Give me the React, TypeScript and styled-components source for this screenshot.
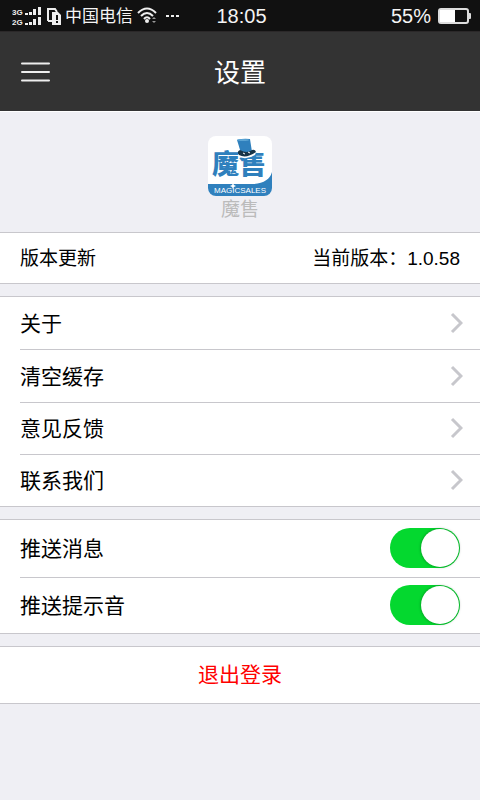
import React, { useState } from "react";
import styled, { createGlobalStyle, css } from "styled-components";

const GlobalStyle = createGlobalStyle`
  * { box-sizing: border-box; }
  body {
    margin: 0;
    background: #efeff4;
    font-family: "Liberation Sans", "Noto Sans CJK SC", sans-serif;
    color: #000;
  }
  button { font: inherit; color: inherit; background: none; border: 0; padding: 0; margin: 0; cursor: pointer; }
  h1, p { margin: 0; font-weight: 400; }
  svg { display: block; flex: none; }
`;

const Page = styled.div`
  min-height: 100vh;
  background: #efeff4;
`;

const StatusBar = styled.div`
  display: grid;
  grid-template-columns: 1fr auto 1fr;
  align-items: center;
  height: 32px;
  padding: 0 9px 0 12px;
  background: #111;
  border-bottom: 1px solid #2b2829;
  color: #f4f4f4;
  font-size: 20px;
  line-height: 24px;
`;

const StatusSide = styled.div<{ $end?: boolean }>`
  display: flex;
  align-items: center;
  gap: 4px;
  justify-content: ${(p) => (p.$end ? "flex-end" : "flex-start")};
`;

const Carrier = styled.span`
  padding-top: 2px;
  font-size: 17px;
  white-space: nowrap;
`;

const Charge = styled.span`
  margin-right: 3px;
`;

const Header = styled.header`
  display: grid;
  grid-template-columns: 1fr auto 1fr;
  align-items: center;
  height: 80px;
  background: #333;
  padding: 0 20px;
  border-bottom: 1px solid #fff;
  color: #fff;
`;

const MenuButton = styled.button`
  justify-self: start;
`;

const Title = styled.h1`
  padding-top: 2px;
  font-size: 26px;
  line-height: 40px;
`;

const Brand = styled.section`
  display: flex;
  flex-direction: column;
  align-items: center;
  padding: 24px 0 10px;
`;

const BrandName = styled.p`
  padding-top: 2px;
  font-size: 19px;
  line-height: 24px;
  color: #bbb;
`;

const Groups = styled.main`
  display: flex;
  flex-direction: column;
  gap: 12px;
`;

const Group = styled.section<{ $height: number }>`
  display: grid;
  grid-auto-rows: 1fr;
  min-height: ${(p) => p.$height}px;
  padding-left: 20px;
  background: #fff;
  border: solid #c8c7cc;
  border-width: 1px 0;
`;

const rowStyle = css`
  display: flex;
  align-items: center;
  justify-content: space-between;
  width: 100%;
  padding-right: 20px;
  font-size: 21px;
  line-height: 30px;
  text-align: left;
  & + & {
    border-top: 1px solid #c8c7cc;
  }
`;

const LinkRow = styled.button`
  ${rowStyle}
  padding-right: 17px;
`;

const ToggleRow = styled.label`
  ${rowStyle}
`;

const VersionRow = styled.button`
  ${rowStyle}
  font-size: 19px;
`;

const RowText = styled.span`
  padding-top: 2px;
`;

const Switch = styled.input`
  appearance: none;
  flex: none;
  display: flex;
  align-items: center;
  width: 70px;
  height: 40px;
  margin: 0;
  padding: 1px;
  border-radius: 20px;
  background: #ddd;
  cursor: pointer;
  &::before {
    content: "";
    width: 38px;
    height: 38px;
    border-radius: 50%;
    background: #fff;
    box-shadow: 0 0 3px rgba(0, 0, 0, 0.4);
  }
  &:checked {
    background: #04d82f;
    justify-content: flex-end;
  }
`;

const LogoutButton = styled.button`
  min-height: 58px;
  width: 100%;
  background: #fff;
  border: solid #c8c7cc;
  border-width: 1px 0;
  color: #f00;
  font-size: 21px;
  line-height: 30px;
`;

const SignalIcon = () => (
  <svg width="31" height="20" viewBox="0 0 31 20" fill="#eee" aria-hidden="true">
    <g fontFamily="Liberation Sans, sans-serif" fontSize="8" fontWeight="700">
      <text x="0" y="9">3G</text>
      <text x="0" y="19">2G</text>
    </g>
    <path d="M13 7h3v2h-3zM17 6h3v3h-3zM21 3h3v6h-3zM26 1h3v8h-3zM13 17h3v2h-3zM17 16h3v3h-3zM21 13h3v6h-3zM26 11h3v8h-3z" />
  </svg>
);

const SimIcon = () => (
  <svg width="14" height="18" viewBox="0 0 14 18" aria-hidden="true">
    <path d="M1 14V2h7l2 3M1 14h4" fill="none" stroke="#eee" strokeWidth="2" />
    <path d="M5 5h6l3 3v10H5z" fill="#eee" />
    <path d="M9 8h2v5H9zM9 14h2v2H9z" fill="#111" />
  </svg>
);

const WifiIcon = () => (
  <svg width="21" height="17" viewBox="0 0 21 17" aria-hidden="true">
    <g fill="none" stroke="#eee" strokeWidth="2">
      <path d="M1 6Q10 -3 19 6" />
      <path d="M4 9Q10 3 16 9" />
      <path d="M7 12Q10 8.500 13 12" />
    </g>
    <circle cx="10" cy="14" r="2" fill="#eee" />
    <path d="M15 12l2-2 2 2zM15 14l2 2 2-2z" fill="#999" />
  </svg>
);

const DotsIcon = () => (
  <svg width="20" height="4" viewBox="0 0 20 4" fill="#eee" aria-hidden="true">
    <path d="M4 1h3v2H4zM9 1h3v2H9zM14 1h3v2h-3z" />
  </svg>
);

const BatteryIcon = () => (
  <svg width="33" height="16" viewBox="0 0 33 16" aria-hidden="true">
    <rect x="1" y="1" width="29" height="14" rx="2" fill="#111" stroke="#ddd" strokeWidth="2" />
    <path d="M2 2h15v12H2z" fill="#fff" />
    <path d="M31 5h1q1 0 1 1v4q0 1-1 1h-1z" fill="#ddd" />
  </svg>
);

const MenuIcon = () => (
  <svg width="32" height="22" viewBox="0 0 32 22" aria-hidden="true">
    <path d="M2 2.500h27M2 11h27M2 19.500h27" stroke="#eee" strokeWidth="2" strokeLinecap="round" />
  </svg>
);

const Chevron = () => (
  <svg width="13" height="22" viewBox="0 0 13 22" aria-hidden="true">
    <path d="M2 2l9 9-9 9" fill="none" stroke="#c7c7cc" strokeWidth="3" />
  </svg>
);

const Logo = () => (
  <svg width="64" height="60" viewBox="0 0 64 60" role="img" aria-label="魔售 MAGICSALES">
    <defs>
      <clipPath id="tile">
        <rect width="64" height="60" rx="8" />
      </clipPath>
    </defs>
    <g clipPath="url(#tile)">
      <path d="M0 0h64v60H0z" fill="#fff" />
      <path d="M0 48h45Q61 47 64 36v24H0z" fill="#2f80bd" />
      <g fill="#2f80bd" fontFamily="Noto Sans CJK SC, sans-serif" fontWeight="900" fontSize="27">
        <text x="4" y="38">魔</text>
        <text x="31" y="38">售</text>
      </g>
      <path d="M30 16Q38 11 49 14l-2 5q-8 5-16 2z" fill="#fff" />
      <path d="M29 4q6-2 13-1l2 13q-6 3-11 1z" fill="#2f80bd" />
      <path d="M32 14q-4 2-1 5 7 4 17-3-1-3-4-2-5 4-12 0z" fill="#183448" />
      <path d="M35 17l2 1M40 16l2 1" stroke="#fff" />
      <ellipse cx="35" cy="4" rx="6" ry="1" fill="#5ba4d4" />
      <text x="32" y="57" textAnchor="middle" fill="#fff" fontFamily="Liberation Sans, sans-serif" fontSize="8">
        MAGICSALES
      </text>
      <path d="M25 47l1 2 2 1-2 1-1 2-1-2-2-1 2-1z" fill="#fff" />
    </g>
  </svg>
);

const links = ["关于", "清空缓存", "意见反馈", "联系我们"];
const toggles = ["推送消息", "推送提示音"];

export default function App() {
  const [enabled, setEnabled] = useState([true, true]);
  const flip = (index: number) =>
    setEnabled((values) => values.map((value, i) => (i === index ? !value : value)));

  return (
    <Page>
      <GlobalStyle />
      <StatusBar>
        <StatusSide>
          <SignalIcon />
          <SimIcon />
          <Carrier>中国电信</Carrier>
          <WifiIcon />
          <DotsIcon />
        </StatusSide>
        <span>18:05</span>
        <StatusSide $end>
          <Charge>55%</Charge>
          <BatteryIcon />
        </StatusSide>
      </StatusBar>
      <Header>
        <MenuButton aria-label="菜单">
          <MenuIcon />
        </MenuButton>
        <Title>设置</Title>
      </Header>
      <Brand>
        <Logo />
        <BrandName>魔售</BrandName>
      </Brand>
      <Groups>
        <Group $height={52}>
          <VersionRow>
            <RowText>版本更新</RowText>
            <RowText>当前版本：1.0.58</RowText>
          </VersionRow>
        </Group>
        <Group $height={211}>
          {links.map((label) => (
            <LinkRow key={label}>
              <RowText>{label}</RowText>
              <Chevron />
            </LinkRow>
          ))}
        </Group>
        <Group $height={115}>
          {toggles.map((label, index) => (
            <ToggleRow key={label}>
              <RowText>{label}</RowText>
              <Switch type="checkbox" role="switch" checked={enabled[index]} onChange={() => flip(index)} />
            </ToggleRow>
          ))}
        </Group>
        <LogoutButton>
          <RowText>退出登录</RowText>
        </LogoutButton>
      </Groups>
    </Page>
  );
}
